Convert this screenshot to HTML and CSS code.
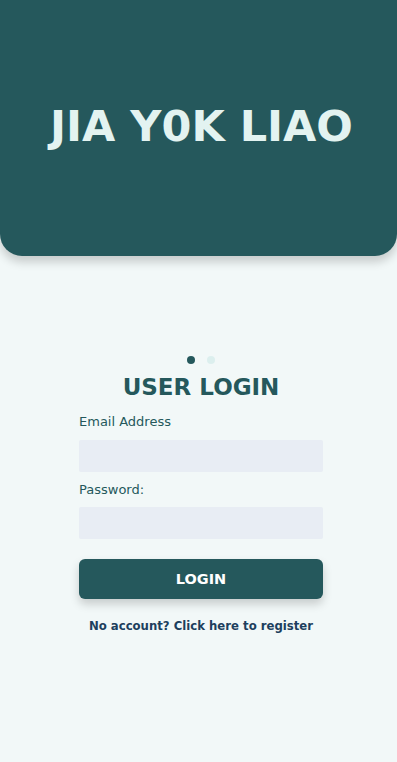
FILE: index.html
```html
<!DOCTYPE html>
<html>
<head>
<title>Jia Y0k Liao - Login</title>
<link rel="stylesheet" href="styles.css">
</head>
<body>
<!-- Header -->
<div class="header">
    <h1 class="brand">JIA Y0K LIAO</h1>
</div>

<!-- Login form -->
<div class="page">
    <div class="login">
        <div class="dots">
            <span class="dot active"></span>
            <span class="dot"></span>
        </div>
        <h2 class="title">USER LOGIN</h2>
        <label class="label" for="email">Email Address</label>
        <input class="input" id="email" type="email">
        <label class="label" for="password">Password:</label>
        <input class="input" id="password" type="password">
        <button class="btn">LOGIN</button>
        <a class="register" href="#">No account? Click here to register</a>
    </div>
</div>
</body>
</html>
```

FILE: styles.css
```css
body {
    font-family: "DejaVu Sans", "Noto Sans", sans-serif;
    background: #f2f8f8;
    color: #25585c;
    margin: 0px;
    padding: 0px;
}
.header {
    height: 256px;
    background: #25585c;
    border-radius: 0px 0px 22px 22px;
    box-shadow: 0px 6px 10px rgba(0, 0, 0, 0.18);
    display: flex;
    justify-content: center;
    padding-left: 6px;
}
.brand {
    margin: 102px 0px 0px;
    color: #e3f3f1;
    font-size: 43px;
    line-height: 48px;
    font-weight: bold;
    letter-spacing: 0px;
}
.page {
    display: flex;
    justify-content: center;
    padding: 100px 0px 0px 5px;
}
.login {
    width: 244px;
    display: flex;
    flex-direction: column;
}
.dots {
    display: flex;
    justify-content: center;
    gap: 12px;
    padding-right: 1px;
}
.dot {
    width: 8px;
    height: 8px;
    border-radius: 50%;
    background: #dcefee;
}
.dot.active {
    background: #25585c;
}
.title {
    margin: 8px 0px 0px;
    text-align: center;
    font-size: 23px;
    line-height: 30px;
    font-weight: bold;
    color: #25585c;
}
.label {
    margin-top: 10px;
    font-size: 13px;
    line-height: 16px;
    color: #25585c;
}
.title + .label {
    margin-top: 12px;
}
.input {
    margin-top: 10px;
    height: 32px;
    border: none;
    border-radius: 2px;
    background: #e8edf4;
    padding: 0px 8px;
    box-sizing: border-box;
}
.label + .input + .label + .input {
    margin-top: 9px;
}
.btn {
    margin-top: 20px;
    height: 40px;
    border: none;
    border-radius: 6px;
    background: #25585c;
    color: #ffffff;
    font-family: inherit;
    font-size: 14.5px;
    font-weight: bold;
    box-shadow: 0px 5px 10px rgba(0, 0, 0, 0.18);
}
.register {
    margin-top: 20px;
    text-align: center;
    color: #1d3f5e;
    font-size: 11.7px;
    font-weight: bold;
    text-decoration: none;
    white-space: nowrap;
}
```
